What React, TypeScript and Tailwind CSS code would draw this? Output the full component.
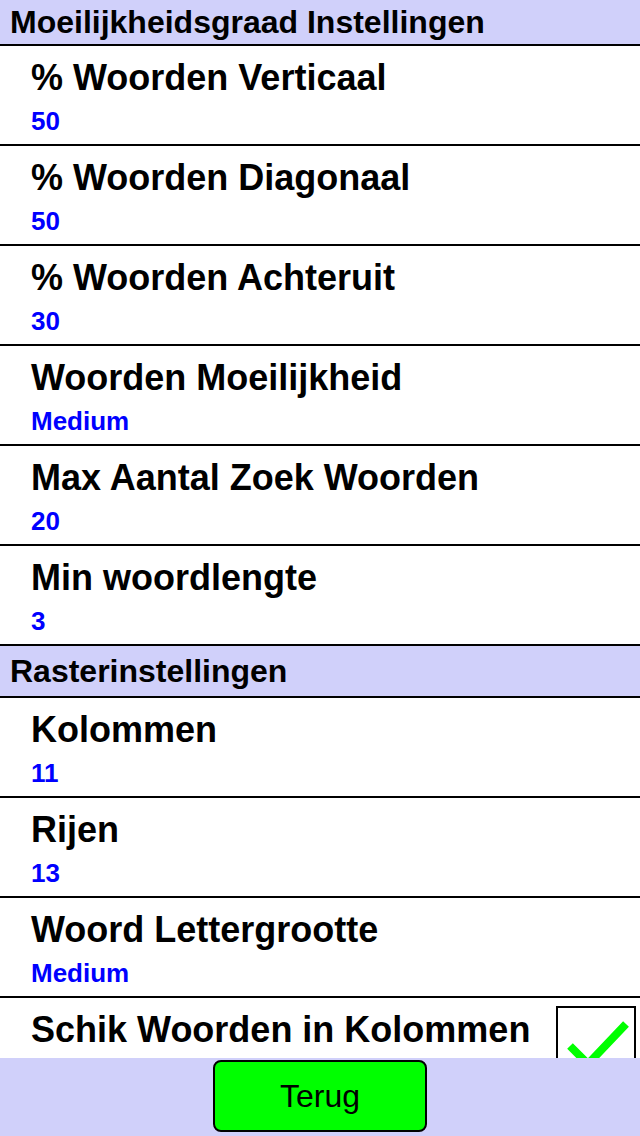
const font = { fontFamily: '"Liberation Sans", Arial, Helvetica, sans-serif' };

type Setting = { label: string; value?: string; checked?: boolean };

const difficulty: Setting[] = [
  { label: '% Woorden Verticaal', value: '50' },
  { label: '% Woorden Diagonaal', value: '50' },
  { label: '% Woorden Achteruit', value: '30' },
  { label: 'Woorden Moeilijkheid', value: 'Medium' },
  { label: 'Max Aantal Zoek Woorden', value: '20' },
  { label: 'Min woordlengte', value: '3' },
];

const grid: Setting[] = [
  { label: 'Kolommen', value: '11' },
  { label: 'Rijen', value: '13' },
  { label: 'Woord Lettergrootte', value: 'Medium' },
  { label: 'Schik Woorden in Kolommen', checked: true },
];

const SectionHeader = ({ title, tall }: { title: string; tall?: boolean }) => (
  <div
    className={`flex shrink-0 items-center bg-[#d0d0fa] border-b-2 border-black px-[10px] ${
      tall ? 'h-[52px]' : 'h-[46px]'
    }`}
  >
    <span className="text-[32px] leading-[32px] font-bold text-black">{title}</span>
  </div>
);

const SettingRow = ({ item }: { item: Setting }) => (
  <div className="flex h-[100px] shrink-0 border-b-2 border-black bg-white">
    <div className="flex-1 pl-[31px] pt-[14px]">
      <div className="text-[36px] leading-[36px] font-bold text-black whitespace-nowrap">
        {item.label}
      </div>
      {item.value && (
        <div className="mt-[12px] text-[26px] leading-[26px] font-bold text-[#0000ff]">
          {item.value}
        </div>
      )}
    </div>
    {item.checked !== undefined && (
      <div className="mr-[4px] mt-[8px] w-[80px] h-[80px] border-2 border-black bg-white">
        {item.checked && (
          <svg viewBox="0 0 76 76" className="w-full h-full">
            <polyline
              points="12,38 30,56 68,16"
              fill="none"
              stroke="#00ff00"
              strokeWidth="8"
            />
          </svg>
        )}
      </div>
    )}
  </div>
);

export default function App() {
  return (
    <div className="flex flex-col w-[640px] h-[1136px] bg-white overflow-hidden" style={font}>
      <div className="flex-1 min-h-0 overflow-hidden flex flex-col">
        <SectionHeader title="Moeilijkheidsgraad Instellingen" />
        {difficulty.map((item) => (
          <SettingRow key={item.label} item={item} />
        ))}
        <SectionHeader title="Rasterinstellingen" tall />
        {grid.map((item) => (
          <SettingRow key={item.label} item={item} />
        ))}
      </div>
      <div className="h-[78px] shrink-0 bg-[#d0d0fa] flex justify-center pt-[2px]">
        <button className="w-[214px] h-[72px] rounded-[8px] border-2 border-black bg-[#00ff00] text-[32px] text-black">
          Terug
        </button>
      </div>
    </div>
  );
}
